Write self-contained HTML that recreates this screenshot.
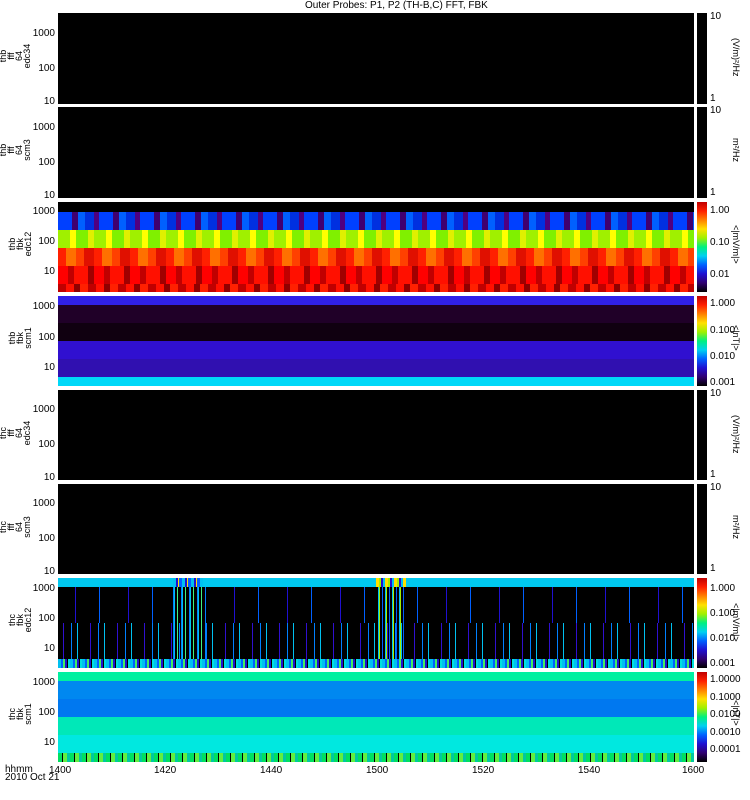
<!DOCTYPE html><html><head><style>
body{margin:0;width:750px;height:800px;background:#fff;position:relative;overflow:hidden;font-family:"Liberation Sans",sans-serif;font-size:10px;color:#000}
.p{position:absolute;left:58px;width:636px;background:#000;overflow:hidden}
.b{position:absolute;left:0;width:100%}
.cb{position:absolute;left:697px;width:10px;background:#000}
.t{position:absolute;font-size:10px;line-height:10px}
.yl{position:absolute;width:40px;text-align:right;font-size:10px;line-height:10px}
.lab{position:absolute;transform:rotate(-90deg);transform-origin:center;text-align:center;line-height:8px;font-size:9px;width:60px}
.un{position:absolute;writing-mode:vertical-rl;font-size:9px;white-space:nowrap;left:731px}
.rainbow{background:linear-gradient(to bottom,#c00000,#ff2000,#ff8000,#ffe000,#a0f000,#00f080,#00d0f0,#0060ff,#2010d0,#300070,#000)}
</style></head><body>
<div class="t" style="left:305px;top:1px;font-size:10px">Outer Probes: P1, P2 (TH-B,C) FFT, FBK</div>

<div class="p" style="top:13px;height:91px"></div>
<div class="p" style="top:107px;height:91px"></div>
<div class="p" style="top:202px;height:90px">
 <div class="b" style="top:10px;height:18px;background:repeating-linear-gradient(90deg,#0040ff 0 14px,#400070 14px 20px,#0060ff 20px 27px,#0030e0 27px 36px,#500080 36px 41px)"></div>
 <div class="b" style="top:28px;height:18px;background:repeating-linear-gradient(90deg,#a0f000 0 12px,#ffff00 12px 18px,#80f000 18px 30px,#e0f000 30px 36px)"></div>
 <div class="b" style="top:46px;height:18px;background:repeating-linear-gradient(90deg,#ff2000 0 8px,#ff7000 8px 18px,#ff4000 18px 26px,#e01000 26px 36px)"></div>
 <div class="b" style="top:64px;height:18px;background:repeating-linear-gradient(90deg,#ff0000 0 10px,#c00000 10px 16px,#ff1000 16px 30px,#a00000 30px 36px)"></div>
 <div class="b" style="top:82px;height:8px;background:repeating-linear-gradient(90deg,#c00000 0 8px,#ff1000 8px 16px,#900000 16px 22px,#ff2000 22px 30px)"></div>
</div>
<div class="p" style="top:296px;height:90px">
 <div class="b" style="top:0;height:9px;background:#3020e8"></div>
 <div class="b" style="top:9px;height:18px;background:#200028"></div>
 <div class="b" style="top:27px;height:18px;background:#100010"></div>
 <div class="b" style="top:45px;height:18px;background:#3010d0"></div>
 <div class="b" style="top:63px;height:18px;background:#3010b0"></div>
 <div class="b" style="top:81px;height:9px;background:#00d8f8"></div>
</div>
<div class="p" style="top:390px;height:90px"></div>
<div class="p" style="top:484px;height:90px"></div>
<div class="p" style="top:578px;height:90px">
 <div class="b" style="top:0;height:9px;background:#00c8f0"></div>
 <div class="b" style="top:9px;height:36px;background:repeating-linear-gradient(90deg,transparent 0 17px,#2010d0 17px 18px,transparent 18px 41px,#0060ff 41px 42px,transparent 42px 53px)"></div>
 <div class="b" style="top:45px;height:36px;background:repeating-linear-gradient(90deg,transparent 0 5px,#3010d0 5px 6px,transparent 6px 13px,#0080ff 13px 14px,transparent 14px 19px,#00c0f0 19px 20px,transparent 20px 27px)"></div>
 <div class="b" style="top:81px;height:9px;background:repeating-linear-gradient(90deg,#00c0f0 0 3px,#0060ff 3px 5px,#40f060 5px 7px,#2010d0 7px 9px,#000 9px 10px,#00e0e0 10px 12px)"></div>
 <div class="b" style="left:112px;width:36px;top:9px;height:72px;background:repeating-linear-gradient(90deg,transparent 0 3px,#0080ff 3px 4px,#00c0f0 4px 5px,transparent 5px 7px,#40f080 7px 8px)"></div>
 <div class="b" style="left:318px;width:30px;top:9px;height:72px;background:repeating-linear-gradient(90deg,transparent 0 2px,#00c0f0 2px 3px,#a0f000 3px 4px,transparent 4px 6px,#0060ff 6px 7px)"></div>
 <div class="b" style="left:115px;width:30px;top:0;height:9px;background:repeating-linear-gradient(90deg,#00c0f0 0 3px,#2010d0 3px 5px,#ffe000 5px 6px,#0060ff 6px 9px)"></div>
 <div class="b" style="left:318px;width:30px;top:0;height:9px;background:repeating-linear-gradient(90deg,#ffe000 0 3px,#a0f000 3px 5px,#2010d0 5px 7px,#00c0f0 7px 9px)"></div>
</div>
<div class="p" style="top:672px;height:90px">
 <div class="b" style="top:0;height:9px;background:#00f0a0"></div>
 <div class="b" style="top:9px;height:18px;background:#0088f0"></div>
 <div class="b" style="top:27px;height:18px;background:#0078f0"></div>
 <div class="b" style="top:45px;height:18px;background:#00e8b8"></div>
 <div class="b" style="top:63px;height:18px;background:#00e8e0"></div>
 <div class="b" style="top:81px;height:9px;background:repeating-linear-gradient(90deg,#00e060 0 4px,#000 4px 5px,#60f040 5px 9px,#00c8a0 9px 12px)"></div>
</div>

<div class="cb" style="top:13px;height:91px"></div>
<div class="cb" style="top:107px;height:91px"></div>
<div class="cb rainbow" style="top:202px;height:90px"></div>
<div class="cb rainbow" style="top:296px;height:90px"></div>
<div class="cb" style="top:390px;height:90px"></div>
<div class="cb" style="top:484px;height:90px"></div>
<div class="cb rainbow" style="top:578px;height:90px"></div>
<div class="cb rainbow" style="top:672px;height:90px"></div>

<div class="t" style="left:710px;top:12px">10</div><div class="t" style="left:710px;top:94px">1</div>
<div class="t" style="left:710px;top:106px">10</div><div class="t" style="left:710px;top:188px">1</div>
<div class="t" style="left:710px;top:206px">1.00</div><div class="t" style="left:710px;top:238px">0.10</div><div class="t" style="left:710px;top:270px">0.01</div>
<div class="t" style="left:710px;top:299px">1.000</div><div class="t" style="left:710px;top:326px">0.100</div><div class="t" style="left:710px;top:352px">0.010</div><div class="t" style="left:710px;top:378px">0.001</div>
<div class="t" style="left:710px;top:389px">10</div><div class="t" style="left:710px;top:470px">1</div>
<div class="t" style="left:710px;top:483px">10</div><div class="t" style="left:710px;top:564px">1</div>
<div class="t" style="left:710px;top:584px">1.000</div><div class="t" style="left:710px;top:609px">0.100</div><div class="t" style="left:710px;top:634px">0.010</div><div class="t" style="left:710px;top:659px">0.001</div>
<div class="t" style="left:710px;top:675px">1.0000</div><div class="t" style="left:710px;top:693px">0.1000</div><div class="t" style="left:710px;top:710px">0.0100</div><div class="t" style="left:710px;top:728px">0.0010</div><div class="t" style="left:710px;top:745px">0.0001</div>
<div class="un" style="top:38px">(V/m)²/Hz</div>
<div class="un" style="top:138px">m²/Hz</div>
<div class="un" style="top:225px">&lt;|mV/m|&gt;</div>
<div class="un" style="top:325px">&lt;|nT|&gt;</div>
<div class="un" style="top:415px">(V/m)²/Hz</div>
<div class="un" style="top:515px">m²/Hz</div>
<div class="un" style="top:603px">&lt;|mV/m|&gt;</div>
<div class="un" style="top:700px">&lt;|nT|&gt;</div>

<div class="yl" style="left:15px;top:29px">1000</div><div class="yl" style="left:15px;top:64px">100</div><div class="yl" style="left:15px;top:97px">10</div>
<div class="yl" style="left:15px;top:123px">1000</div><div class="yl" style="left:15px;top:158px">100</div><div class="yl" style="left:15px;top:191px">10</div>
<div class="yl" style="left:15px;top:207px">1000</div><div class="yl" style="left:15px;top:237px">100</div><div class="yl" style="left:15px;top:267px">10</div>
<div class="yl" style="left:15px;top:302px">1000</div><div class="yl" style="left:15px;top:333px">100</div><div class="yl" style="left:15px;top:363px">10</div>
<div class="yl" style="left:15px;top:405px">1000</div><div class="yl" style="left:15px;top:440px">100</div><div class="yl" style="left:15px;top:473px">10</div>
<div class="yl" style="left:15px;top:499px">1000</div><div class="yl" style="left:15px;top:534px">100</div><div class="yl" style="left:15px;top:567px">10</div>
<div class="yl" style="left:15px;top:584px">1000</div><div class="yl" style="left:15px;top:614px">100</div><div class="yl" style="left:15px;top:644px">10</div>
<div class="yl" style="left:15px;top:678px">1000</div><div class="yl" style="left:15px;top:708px">100</div><div class="yl" style="left:15px;top:738px">10</div>

<div class="lab" style="left:-15px;top:40px">thb<br>fff<br>64<br>edc34</div>
<div class="lab" style="left:-15px;top:134px">thb<br>fff<br>64<br>scm3</div>
<div class="lab" style="left:-10px;top:232px">thb<br>fbk<br>edc12</div>
<div class="lab" style="left:-10px;top:326px">thb<br>fbk<br>scm1</div>
<div class="lab" style="left:-15px;top:417px">thc<br>fff<br>64<br>edc34</div>
<div class="lab" style="left:-15px;top:511px">thc<br>fff<br>64<br>scm3</div>
<div class="lab" style="left:-10px;top:608px">thc<br>fbk<br>edc12</div>
<div class="lab" style="left:-10px;top:702px">thc<br>fbk<br>scm1</div>

<div class="t" style="left:5px;top:765px">hhmm</div>
<div class="t" style="left:5px;top:773px">2010 Oct 21</div>
<div class="t" style="left:49px;top:766px">1400</div>
<div class="t" style="left:154px;top:766px">1420</div>
<div class="t" style="left:260px;top:766px">1440</div>
<div class="t" style="left:366px;top:766px">1500</div>
<div class="t" style="left:472px;top:766px">1520</div>
<div class="t" style="left:578px;top:766px">1540</div>
<div class="t" style="left:682px;top:766px">1600</div>
</body></html>
